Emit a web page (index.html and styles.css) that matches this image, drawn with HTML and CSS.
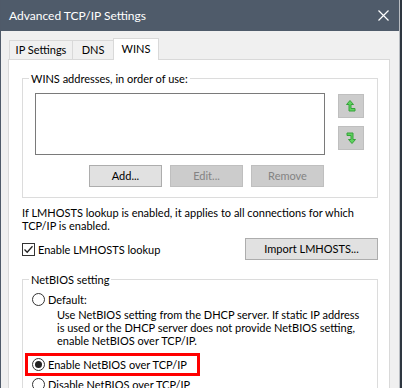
FILE: index.html
```html
<!DOCTYPE html>
<html lang="en">
<head>
    <meta charset="UTF-8">
    <title>Advanced TCP/IP Settings</title>
    <link rel="stylesheet" href="styles.css">
</head>
<body>
    <div class="window">
        <div class="titlebar">
            <span class="title">Advanced TCP/IP Settings</span>
            <svg class="close-icon" width="11" height="11" viewBox="0 0 11 11">
                <path d="M0.5 0.5 L10.5 10.5 M10.5 0.5 L0.5 10.5" stroke="#fff" stroke-width="1.2"/>
            </svg>
        </div>

        <div class="tabs">
            <div class="tab tab-ip">IP Settings</div>
            <div class="tab tab-dns">DNS</div>
            <div class="tab active">WINS</div>
        </div>

        <div class="tab-page">
            <fieldset class="group">
                <legend>WINS addresses, in order of use:</legend>
                <div class="group-body wins-body">
                    <div class="wins-row">
                        <div class="listbox"></div>
                        <div class="move-btns">
                            <!-- move up -->
                            <div class="icon-btn">
                                <svg width="10" height="12" viewBox="0 0 10 12">
                                    <path d="M4 0.5 L7.5 4.5 L5 4.5 L5 8.5 L9 8.5 L9 11 L3 11 L3 4.5 L0.5 4.5 Z" fill="#5fd35f" stroke="#36a23a" stroke-width="1"/>
                                </svg>
                            </div>
                            <!-- move down -->
                            <div class="icon-btn">
                                <svg width="10" height="12" viewBox="0 0 10 12">
                                    <path d="M1 1 L7 1 L7 7.5 L9.5 7.5 L6 11.5 L2.5 7.5 L5 7.5 L5 3.5 L1 3.5 Z" fill="#5fd35f" stroke="#36a23a" stroke-width="1"/>
                                </svg>
                            </div>
                        </div>
                    </div>
                    <div class="btn-row">
                        <div class="btn">Add...</div>
                        <div class="btn disabled">Edit...</div>
                        <div class="btn disabled">Remove</div>
                    </div>
                </div>
            </fieldset>

            <p class="note">If LMHOSTS lookup is enabled, it applies to all connections for which<br>TCP/IP is enabled.</p>

            <div class="lmhosts-row">
                <div class="check">
                    <span class="checkbox">
                        <svg width="11" height="11" viewBox="0 0 11 11">
                            <path d="M1.5 5.5 L4.2 8.3 L9.5 2.2" fill="none" stroke="#222" stroke-width="1.3"/>
                        </svg>
                    </span>
                    Enable LMHOSTS lookup
                </div>
                <div class="btn import-btn">Import LMHOSTS...</div>
            </div>

            <fieldset class="group netbios-group">
                <legend>NetBIOS setting</legend>
                <div class="group-body netbios-body">
                    <div class="radio-row"><span class="radio"></span>Default:</div>
                    <p class="radio-desc">Use NetBIOS setting from the DHCP server. If static IP address<br>is used or the DHCP server does not provide NetBIOS setting,<br>enable NetBIOS over TCP/IP.</p>
                    <div class="radio-row highlight"><span class="radio checked"></span>Enable NetBIOS over TCP/IP</div>
                    <div class="radio-row"><span class="radio"></span>Disable NetBIOS over TCP/IP</div>
                </div>
            </fieldset>
        </div>
    </div>
</body>
</html>
```

FILE: styles.css
```css
body {
    margin: 0;
    background-color: #2e3640;
    font-family: Lato, "Liberation Sans", sans-serif;
    font-size: 11px;
    color: #000;
}
.window {
    width: 400px;
    height: 388px;
    overflow: hidden;
    box-sizing: border-box;
    background-color: #f0f0f0;
    border-left: 1px solid #4f5a69;
    border-right: 1px solid #b9bdc2;
}
.titlebar {
    height: 31px;
    display: flex;
    justify-content: space-between;
    align-items: center;
    padding: 0 10px 0 8px;
    background-color: #4f5b6a;
    color: #fff;
}
.title {
    font-size: 12px;
}
.tabs {
    display: flex;
    align-items: flex-end;
    height: 28px;
    padding-left: 8px;
}
.tab {
    height: 18px;
    line-height: 18px;
    text-align: center;
    border: 1px solid #d9d9d9;
    border-bottom: none;
    border-right: none;
    background-color: #f0f0f0;
}
.tab-ip {
    width: 62px;
}
.tab-dns {
    width: 40px;
}
.tab.active {
    width: 44px;
    height: 21px;
    line-height: 20px;
    border-right: 1px solid #d9d9d9;
    background-color: #fff;
    margin-bottom: -1px;
    position: relative;
}
.tab-page {
    margin: 0 9px 0 7px;
    height: 340px;
    background-color: #fff;
    border: 1px solid #d9d9d9;
    padding: 12px 11px 0 13px;
}
.group {
    margin: 0;
    border: 1px solid #dcdcdc;
    padding: 0;
}
.group legend {
    padding: 0 2px;
    margin-left: 6px;
}
.wins-body {
    padding: 8px 0 10px 12px;
}
.wins-row {
    display: flex;
    gap: 13px;
}
.listbox {
    width: 288px;
    height: 60px;
    border: 1px solid #7a7a7a;
    background-color: #fff;
}
.move-btns {
    display: flex;
    flex-direction: column;
    gap: 8px;
    padding-top: 1px;
}
.icon-btn {
    width: 24px;
    height: 22px;
    display: flex;
    align-items: center;
    justify-content: center;
    background-color: #cccccc;
    border: 1px solid #bfbfbf;
}
.btn-row {
    display: flex;
    gap: 8px;
    margin-top: 10px;
    padding-left: 54px;
}
.btn {
    width: 71px;
    height: 20px;
    line-height: 20px;
    text-align: center;
    background-color: #e1e1e1;
    border: 1px solid #adadad;
}
.btn.disabled {
    background-color: #cccccc;
    border-color: #bfbfbf;
    color: #838383;
}
.note {
    margin: 8px 0 0 0;
    line-height: 13px;
}
.lmhosts-row {
    display: flex;
    justify-content: space-between;
    align-items: center;
    margin-top: 6px;
}
.check {
    display: flex;
    align-items: center;
    gap: 3px;
}
.checkbox {
    width: 11px;
    height: 11px;
    border: 1px solid #333;
    display: flex;
}
.import-btn {
    width: 131px;
}
.netbios-group {
    margin-top: 13px;
}
.netbios-body {
    padding: 6px 0 10px 9px;
}
.radio-row {
    display: flex;
    align-items: center;
    gap: 3px;
    height: 14px;
}
.radio {
    width: 11px;
    height: 11px;
    border: 1px solid #333;
    border-radius: 50%;
    background-color: #fff;
    display: flex;
    align-items: center;
    justify-content: center;
}
.radio.checked::after {
    content: "";
    width: 7px;
    height: 7px;
    border-radius: 50%;
    background-color: #222;
}
.radio-desc {
    margin: 2px 0 0 25px;
    line-height: 13px;
}
.highlight {
    width: 165px;
    height: 17px;
    border: 3px solid #ff0000;
    padding-left: 4px;
    margin: 6px 0 1px -7px;
}
```
